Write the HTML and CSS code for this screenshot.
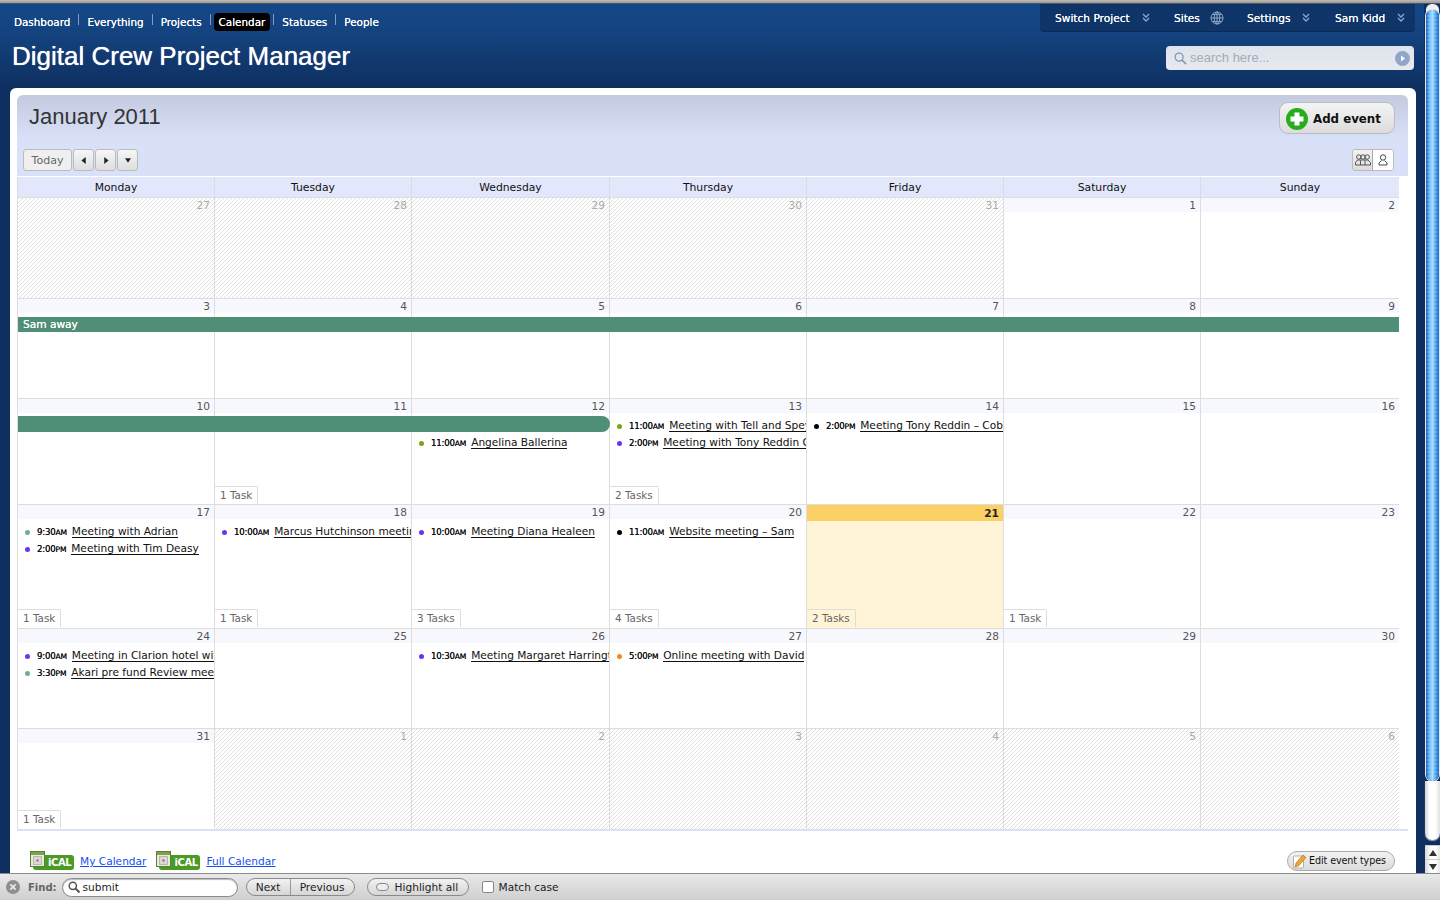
FILE: index.html
```html
<!DOCTYPE html>
<html lang="en">
<head>
<meta charset="utf-8">
<title>Digital Crew Project Manager</title>
<link rel="stylesheet" href="styles.css">
</head>
<body>
<div class="app">
  <div class="topline"></div>
  <div class="main">
    <div class="page">
      <header class="header">
        <div class="header-left">
          <nav class="nav">
            <a class="nav-item">Dashboard</a><i class="sep"></i>
            <a class="nav-item">Everything</a><i class="sep"></i>
            <a class="nav-item">Projects</a><i class="sep"></i>
            <a class="nav-item active">Calendar</a><i class="sep"></i>
            <a class="nav-item">Statuses</a><i class="sep"></i>
            <a class="nav-item">People</a>
          </nav>
          <h1 class="title">Digital Crew Project Manager</h1>
        </div>
        <div class="header-right">
          <div class="usermenu">
            <span class="um um-switch">Switch Project<svg class="chev" viewBox="0 0 8 10"><path d="M1 1l3 3 3-3M1 5l3 3 3-3" fill="none" stroke="#8fa6c6" stroke-width="1.3"/></svg></span>
            <span class="um um-sites">Sites<svg class="globe" viewBox="0 0 14 14"><g fill="none" stroke="#8fa6c6" stroke-width="1"><circle cx="7" cy="7" r="6"/><ellipse cx="7" cy="7" rx="2.8" ry="6"/><path d="M1 7h12M2 3.6h10M2 10.4h10M7 1v12"/></g></svg></span>
            <span class="um um-settings">Settings<svg class="chev" viewBox="0 0 8 10"><path d="M1 1l3 3 3-3M1 5l3 3 3-3" fill="none" stroke="#8fa6c6" stroke-width="1.3"/></svg></span>
            <span class="um um-sam">Sam Kidd<svg class="chev" viewBox="0 0 8 10"><path d="M1 1l3 3 3-3M1 5l3 3 3-3" fill="none" stroke="#8fa6c6" stroke-width="1.3"/></svg></span>
          </div>
          <div class="search">
            <svg class="mag" viewBox="0 0 14 14"><g fill="none" stroke="#7f98bc" stroke-width="1.4"><circle cx="5.5" cy="5.5" r="4.3"/><path d="M8.6 8.6l4.4 4.4" stroke-width="1.8"/></g></svg>
            <span class="placeholder">search here...</span>
            <svg class="go" viewBox="0 0 15 15"><circle cx="7.5" cy="7.5" r="7.5" fill="#8fa6c9"/><path d="M6 4.5l4 3-4 3z" fill="#fff"/></svg>
          </div>
        </div>
      </header>

      <section class="panel">
        <div class="cal-head">
          <div class="head-top">
            <h2 class="month">January 2011</h2>
            <button class="add"><svg class="plus" viewBox="0 0 22 22"><circle cx="11" cy="11" r="11" fill="#27ac1c"/><path d="M8.5 4.5h5v4h4v5h-4v4h-5v-4h-4v-5h4z" fill="#fff"/></svg>Add event</button>
          </div>
          <div class="head-tools">
            <div class="tools-left">
              <span class="tbtn today-btn">Today</span>
              <span class="tbtn arrow"><svg viewBox="0 0 6 8"><path d="M5 0v8L0 4z"/></svg></span>
              <span class="tbtn arrow"><svg viewBox="0 0 6 8"><path d="M1 0v8l5-4z"/></svg></span>
              <span class="tbtn arrow"><svg viewBox="0 0 8 6"><path d="M0 0h8L4 6z"/></svg></span>
            </div>
            <div class="toggle">
              <span class="tog"><svg viewBox="0 0 16 12"><g fill="none" stroke="#333" stroke-width=".8"><circle cx="3.800" cy="3" r="2.200"/><circle cx="8" cy="3" r="2.200"/><circle cx="12.200" cy="3" r="2.200"/><path d="M.5 11V8.500L2.500 6h10.500l2.500 2.500V11zM5.500 6.500V11M10 6.500V11"/></g></svg></span>
              <span class="tog on"><svg viewBox="0 0 16 12"><g fill="none" stroke="#333" stroke-width=".9"><circle cx="8" cy="3.500" r="2.700"/><path d="M6.500 6.500L4 9v2h8V9L9.500 6.500"/></g></svg></span>
            </div>
          </div>
        </div>

        <div class="calendar">
          <div class="dow">
            <div>Monday</div><div>Tuesday</div><div>Wednesday</div><div>Thursday</div><div>Friday</div><div>Saturday</div><div>Sunday</div>
          </div>
          <div class="weeks">
            <div class="week">
              <div class="day other"><div class="date">27</div></div>
              <div class="day other"><div class="date">28</div></div>
              <div class="day other"><div class="date">29</div></div>
              <div class="day other"><div class="date">30</div></div>
              <div class="day other"><div class="date">31</div></div>
              <div class="day"><div class="date">1</div></div>
              <div class="day"><div class="date">2</div></div>
            </div>
            <div class="week">
              <div class="day"><div class="date">3</div></div>
              <div class="day"><div class="date">4</div></div>
              <div class="day"><div class="date">5</div></div>
              <div class="day"><div class="date">6</div></div>
              <div class="day"><div class="date">7</div></div>
              <div class="day"><div class="date">8</div></div>
              <div class="day"><div class="date">9</div></div>
              <div class="bar bar-full">Sam away</div>
            </div>
            <div class="week">
              <div class="day"><div class="date">10</div></div>
              <div class="day"><div class="date">11</div><div class="tasks">1 Task</div></div>
              <div class="day"><div class="date">12</div><div class="lane"></div>
                <div class="event"><i class="dot olive"></i><span class="time">11:00<small>AM</small></span><a class="ev-link">Angelina Ballerina</a></div></div>
              <div class="day"><div class="date">13</div>
                <div class="event"><i class="dot olive"></i><span class="time">11:00<small>AM</small></span><a class="ev-link">Meeting with Tell and Spey</a></div>
                <div class="event"><i class="dot violet"></i><span class="time">2:00<small>PM</small></span><a class="ev-link">Meeting with Tony Reddin Cobalt</a></div>
                <div class="tasks">2 Tasks</div></div>
              <div class="day"><div class="date">14</div>
                <div class="event"><i class="dot black"></i><span class="time">2:00<small>PM</small></span><a class="ev-link">Meeting Tony Reddin – Cobalt</a></div></div>
              <div class="day"><div class="date">15</div></div>
              <div class="day"><div class="date">16</div></div>
              <div class="bar bar-part"></div>
            </div>
            <div class="week">
              <div class="day"><div class="date">17</div>
                <div class="event"><i class="dot green"></i><span class="time">9:30<small>AM</small></span><a class="ev-link">Meeting with Adrian</a></div>
                <div class="event"><i class="dot violet"></i><span class="time">2:00<small>PM</small></span><a class="ev-link">Meeting with Tim Deasy</a></div>
                <div class="tasks">1 Task</div></div>
              <div class="day"><div class="date">18</div>
                <div class="event"><i class="dot violet"></i><span class="time">10:00<small>AM</small></span><a class="ev-link">Marcus Hutchinson meeting</a></div>
                <div class="tasks">1 Task</div></div>
              <div class="day"><div class="date">19</div>
                <div class="event"><i class="dot violet"></i><span class="time">10:00<small>AM</small></span><a class="ev-link">Meeting Diana Healeen</a></div>
                <div class="tasks">3 Tasks</div></div>
              <div class="day"><div class="date">20</div>
                <div class="event"><i class="dot black"></i><span class="time">11:00<small>AM</small></span><a class="ev-link">Website meeting – Sam</a></div>
                <div class="tasks">4 Tasks</div></div>
              <div class="day is-today"><div class="date">21</div><div class="tasks">2 Tasks</div></div>
              <div class="day"><div class="date">22</div><div class="tasks">1 Task</div></div>
              <div class="day"><div class="date">23</div></div>
            </div>
            <div class="week">
              <div class="day"><div class="date">24</div>
                <div class="event"><i class="dot violet"></i><span class="time">9:00<small>AM</small></span><a class="ev-link">Meeting in Clarion hotel with</a></div>
                <div class="event"><i class="dot green"></i><span class="time">3:30<small>PM</small></span><a class="ev-link">Akari pre fund Review meeting</a></div></div>
              <div class="day"><div class="date">25</div></div>
              <div class="day"><div class="date">26</div>
                <div class="event"><i class="dot violet"></i><span class="time">10:30<small>AM</small></span><a class="ev-link">Meeting Margaret Harrington</a></div></div>
              <div class="day"><div class="date">27</div>
                <div class="event"><i class="dot orange"></i><span class="time">5:00<small>PM</small></span><a class="ev-link">Online meeting with David</a></div></div>
              <div class="day"><div class="date">28</div></div>
              <div class="day"><div class="date">29</div></div>
              <div class="day"><div class="date">30</div></div>
            </div>
            <div class="week">
              <div class="day"><div class="date">31</div><div class="tasks">1 Task</div></div>
              <div class="day other"><div class="date">1</div></div>
              <div class="day other"><div class="date">2</div></div>
              <div class="day other"><div class="date">3</div></div>
              <div class="day other"><div class="date">4</div></div>
              <div class="day other"><div class="date">5</div></div>
              <div class="day other"><div class="date">6</div></div>
            </div>
          </div>
        </div>

        <footer class="foot">
          <div class="foot-links">
            <span class="ical"><svg class="ical-ico" viewBox="0 0 15 16"><rect x=".5" y=".5" width="14" height="15" fill="#e9ecd8" stroke="#5d7d35"/><rect x="1" y="1" width="13" height="3" fill="#7da24c"/><path d="M3.500 5.500h8v8h-8z" fill="#d9d9d9" stroke="#999" stroke-width=".6"/><rect x="6.500" y="8.500" width="2" height="2" fill="#c0503c"/></svg>iCAL</span>
            <a class="cal-link">My Calendar</a>
            <span class="ical"><svg class="ical-ico" viewBox="0 0 15 16"><rect x=".5" y=".5" width="14" height="15" fill="#e9ecd8" stroke="#5d7d35"/><rect x="1" y="1" width="13" height="3" fill="#7da24c"/><path d="M3.500 5.500h8v8h-8z" fill="#d9d9d9" stroke="#999" stroke-width=".6"/><rect x="6.500" y="8.500" width="2" height="2" fill="#c0503c"/></svg>iCAL</span>
            <a class="cal-link">Full Calendar</a>
          </div>
          <span class="edit"><svg class="pencil" viewBox="0 0 14 16"><rect x=".5" y="3" width="10" height="12" rx="1" fill="#fff" stroke="#a99" stroke-width=".8"/><path d="M2 14l1-4 7-8 3 2.500-7 8z" fill="#e9a63a" stroke="#b5701c" stroke-width=".7"/></svg>Edit event types</span>
        </footer>
      </section>
    </div>
    <div class="scrollbar">
      <div class="thumb"></div>
      <div class="sb-rest"></div>
      <div class="sb-btn"><svg viewBox="0 0 8 6"><path d="M0 6h8L4 0z"/></svg></div>
      <div class="sb-btn"><svg viewBox="0 0 8 6"><path d="M0 0h8L4 6z"/></svg></div>
    </div>
  </div>
  <div class="find">
    <svg class="find-x" viewBox="0 0 14 14"><circle cx="7" cy="7" r="7" fill="#8e8e8e"/><path d="M4.300 4.300l5.400 5.400M9.700 4.300l-5.400 5.400" stroke="#e6e6e6" stroke-width="1.800"/></svg>
    <span class="find-label">Find:</span>
    <div class="find-input"><svg class="find-mag" viewBox="0 0 12 12"><g fill="none" stroke="#555" stroke-width="1.500"><circle cx="4.800" cy="4.800" r="3.600"/><path d="M7.500 7.500l4 4" stroke-width="2"/></g></svg>submit</div>
    <div class="find-group"><span class="fg-next">Next</span><span class="fg-prev">Previous</span></div>
    <div class="find-high"><i class="hl-pill"></i>Highlight all</div>
    <label class="find-match"><i class="check"></i>Match case</label>
  </div>
</div>
</body>
</html>
```
FILE: styles.css
```css
* { box-sizing: border-box; }
html, body { margin: 0; padding: 0; height: 100%; overflow: hidden; }
body { font-family: "DejaVu Sans", sans-serif; font-size: 10.6px; color: #222; }
.app { width: 1440px; height: 900px; display: flex; flex-direction: column; }
.topline { height: 4px; background: linear-gradient(#bcbcbc, #9a9a9a); border-bottom: 1px solid #555; flex: none; }
.main { flex: 1; min-height: 0; display: flex; }
.page { flex: 1; min-width: 0; display: flex; flex-direction: column; background: #0e2f5f; }

/* header */
.header { height: 84px; flex: none; display: flex; justify-content: space-between; background: linear-gradient(#154888 0, #14437f 35%, #0e2f5f 100%); }
.header-left { padding-left: 12px; }
.nav { display: flex; align-items: center; height: 19px; margin-top: 8px; padding-left: 2px; color: #fff; font-size: 10.4px; }
.nav-item { color: #fff; text-shadow: 0 0 .6px #fff; white-space: nowrap; }
.nav-item.active { background: #000; border-radius: 4px; padding: 0 5px; line-height: 18px; height: 18px; margin: 0 -5px; }
.sep { width: 1px; height: 11px; background: #7f9cc2; margin: -5px 8px 0; }
.title { margin: 10px 0 0; font: 400 26px/30px "Liberation Sans", sans-serif; color: #fff; text-shadow: 0 0 .7px #fff; white-space: nowrap; }
.header-right { width: 384px; display: flex; flex-direction: column; align-items: flex-end; padding-right: 10px; }
.usermenu { width: 375px; height: 28px; background: #0f3568; border-bottom: 1px solid #0b2a55; border-radius: 0 0 4px 4px; margin-right: -1px; color: #fff; display: flex; align-items: center; padding: 1px 0 0 15px; }
.um { display: inline-flex; align-items: center; white-space: nowrap; text-shadow: 0 0 .6px #fff; }
.um-switch { width: 119px; }
.um-sites { width: 73px; }
.um-settings { width: 88px; }
.chev { width: 8px; height: 10px; margin-left: 12px; }
.globe { width: 14px; height: 14px; margin-left: 10px; }
.search { width: 248px; height: 24px; margin-top: 14px; background: linear-gradient(#dfe3eb, #e6e9f0); border-radius: 4px; display: flex; align-items: center; padding: 0 4px 0 8px; }
.mag { width: 13px; height: 13px; }
.placeholder { font: 13px "Liberation Sans", sans-serif; color: #a6abb3; margin: 0 0 1px 3px; flex: 1; }
.go { width: 15px; height: 15px; }

/* panel */
.panel { flex: 1; min-height: 0; margin: 0 8px 0 10px; padding: 7px 8px 0 7px; background: #fff; border-radius: 6px 6px 0 0; display: flex; flex-direction: column; }
.cal-head { height: 82px; flex: none; background: linear-gradient(#c4cbdf 0, #d9e1f9 55%, #d9e1f9 100%); border-radius: 6px 6px 0 0; border-bottom: 1px solid #fff; }
.head-top { height: 54px; display: flex; justify-content: space-between; padding: 7px 13px 0 12px; }
.month { margin: 1px 0 0; font: 400 22px/28px "Liberation Sans", sans-serif; color: #333; }
.add { width: 116px; height: 32px; padding: 1px 0 0 6px; display: flex; align-items: center; border: 1px solid #b9bcc2; border-radius: 9px; background: linear-gradient(#f4f4f4, #dcdcdc); font: 700 11.8px "DejaVu Sans", sans-serif; color: #111; white-space: nowrap; }
.plus { width: 22px; height: 22px; margin-right: 5px; flex: none; }
.head-tools { height: 22px; display: flex; justify-content: space-between; padding: 0 14px 0 6px; }
.tools-left { display: flex; gap: 1px; }
.tbtn { height: 22px; display: flex; align-items: center; justify-content: center; border: 1px solid #bbb; border-radius: 3px; background: linear-gradient(#f6f6f6, #dedede); }
.today-btn { width: 49px; color: #666; background: #efefef; margin-right: 0; font-size: 11px; }
.arrow { width: 21px; }
.arrow svg { width: 6px; height: 7px; fill: #222; }
.toggle { display: flex; width: 42px; height: 22px; border: 1px solid #bbb; border-radius: 3px; overflow: hidden; }
.tog { width: 21px; display: flex; align-items: center; justify-content: center; background: linear-gradient(#f2f2f2, #dcdcdc); border-right: 1px solid #aaa; }
.tog.on { background: #fff; border-right: 0; }
.tog svg { width: 16px; height: 12px; }

/* calendar */
.calendar { flex: none; border-bottom: 2px solid #dbe1f4; }
.dow { width: 1382px; height: 20px; display: grid; grid-template-columns: 197px 197px 198px 197px 197px 197px 199px; background: #e2e7fb; text-align: center; line-height: 21px; color: #111; font-size: 10.8px; }
.dow > div { border-left: 1px solid #d8dbe6; }
.weeks { width: 1382px; height: 632px; display: grid; grid-template-rows: 101px 100px 106px 124px 100px 101px; }
.week { display: grid; grid-template-columns: 197px 197px 198px 197px 197px 197px 199px; position: relative; min-height: 0; }
.day { min-width: 0; overflow: hidden; display: flex; flex-direction: column; background: #fff; border-left: 1px solid #ddd; border-top: 1px solid #ddd; }
.date { height: 14px; flex: none; background: #f7f8fe; text-align: right; padding-right: 4px; line-height: 15px; color: #555; }
.other { background: repeating-linear-gradient(135deg, #e0e0e0 0, #e0e0e0 1px, #fff 1px, #fff 2.83px); }
.other .date { background: none; color: #aaa; }
.is-today { background: #fff5d6; }
.is-today .date { background: #fbd165; font-weight: 700; color: #222; height: 16px; line-height: 17px; }
.lane { height: 17px; flex: none; margin-top: 4px; }
.lane + .event { margin-top: 0; }
.event { height: 17px; flex: none; display: flex; align-items: center; padding-left: 7px; white-space: nowrap; }
.date + .event { margin-top: 4px; }
.dot { width: 5px; height: 5px; border-radius: 50%; flex: none; margin-right: 7px; margin-top: 2px; }
.olive { background: #7aa51a; }
.violet { background: #6a35ee; }
.green { background: #6fb08f; }
.black { background: #000; }
.orange { background: #ef8a1c; }
.time { font-size: 8.6px; letter-spacing: -.2px; margin-right: 5px; color: #111; margin-top: 1px; text-shadow: 0 0 .4px #111; }
.time small { font-size: 7.6px; }
.ev-link { color: #111; border-bottom: 1px solid #111; line-height: 13px; height: 13px; }
.tasks { margin: auto 0 1px; align-self: flex-start; height: 18px; line-height: 17px; padding: 0 5px; border-top: 1px solid #ddd; border-right: 1px solid #ddd; border-radius: 0 2px 0 0; color: #666; background: #fff; white-space: nowrap; font-size: 10.4px; }
.week:nth-child(3) .tasks { margin-bottom: 0; }
.is-today .tasks { background: #fff5d6; }
.bar { position: absolute; left: 1px; color: #fff; background: #4f8f76; padding-left: 5px; text-shadow: 0 0 .5px #fff; }
.bar-full { top: 19px; right: 0; height: 15px; line-height: 15px; }
.bar-part { top: 18px; width: 592px; height: 16px; border-radius: 0 8px 8px 0; }

/* footer */
.foot { flex: 1; min-height: 0; display: flex; justify-content: space-between; padding: 20px 13px 0 16px; }
.foot-links { display: flex; align-items: flex-start; }
.ical { position: relative; width: 41px; height: 15px; margin: 4px 0 0; background: #4a9a25; border-radius: 3px; color: #fff; font: 700 10px/15px "DejaVu Sans", sans-serif; padding-left: 15px; letter-spacing: -.4px; white-space: nowrap; }
.ical-ico { position: absolute; left: -3px; top: -4px; width: 15px; height: 16px; }
.cal-link { color: #1450f0; text-decoration: underline; margin: 4px 13px 0 6px; }
.edit { width: 108px; height: 20px; display: flex; align-items: center; padding: 0 0 1px 5px; border: 1px solid #aaa; border-radius: 10px; background: linear-gradient(#f2f2f2, #dcdcdc); font-size: 9.6px; letter-spacing: -.1px; color: #111; white-space: nowrap; }
.pencil { width: 14px; height: 16px; margin-right: 2px; flex: none; }

/* scrollbar */
.scrollbar { width: 16px; flex: none; display: flex; flex-direction: column; background: #0e2f5f; padding-left: 1px; }
.thumb { margin: 6px 1px 0; height: 771px; flex: none; border-radius: 6px 6px 7px 7px; background: repeating-linear-gradient(0deg, rgba(255,255,255,.1) 0, rgba(255,255,255,.1) 2px, transparent 2px, transparent 4px), linear-gradient(90deg, #0f5fc4, #66b4f4 25%, #a9dcff 50%, #4da3ee 75%, #0f5fc4); box-shadow: 0 0 0 1px #e8e8e8, 0 -6px 0 0 #f0f0f0; }
.sb-rest { flex: 1; margin: 0 0 5px; border-radius: 0 0 7px 7px; background: linear-gradient(90deg, #d0d0d0, #fff 30%, #fff 70%, #e0e0e0); box-shadow: 0 1px 1px #aaa; }
.sb-btn { height: 14px; flex: none; margin-left: 0; display: flex; align-items: center; justify-content: center; background: linear-gradient(90deg, #d8d8d8, #fff 40%, #fff 70%, #e6e6e6); border-top: 1px solid #ccc; }
.sb-btn svg { width: 8px; height: 6px; fill: #333; }

/* find bar */
.find { height: 27px; flex: none; display: flex; align-items: center; padding-left: 6px; background: linear-gradient(#e9e9e9, #cfcfcf); border-top: 1px solid #8a8a8a; color: #222; }
.find-x { width: 14px; height: 14px; flex: none; }
.find-label { font-weight: 700; color: #666; margin: 0 5px 0 8px; font-size: 10px; }
.find-input { width: 176px; height: 19px; display: flex; align-items: center; border: 1px solid #8a8a8a; border-radius: 10px; background: #fff; padding-left: 5px; box-shadow: inset 0 1px 1px #bbb; flex: none; }
.find-mag { width: 12px; height: 12px; margin-right: 3px; }
.find-group { margin-left: 8px; width: 109px; height: 18px; display: flex; border: 1px solid #8a8a8a; border-radius: 9px; line-height: 16px; background: linear-gradient(#f2f2f2, #d6d6d6); flex: none; }
.fg-next { width: 44px; text-align: center; border-right: 1px solid #999; }
.fg-prev { flex: 1; text-align: center; }
.find-high { margin-left: 12px; width: 102px; height: 18px; display: flex; align-items: center; border: 1px solid #8a8a8a; border-radius: 9px; background: linear-gradient(#f2f2f2, #d6d6d6); padding-left: 8px; white-space: nowrap; flex: none; }
.hl-pill { width: 13px; height: 8px; border: 1px solid #888; border-radius: 4px; margin-right: 6px; background: #eee; }
.find-match { margin-left: 13px; display: flex; align-items: center; }
.check { width: 12px; height: 12px; border: 1px solid #888; border-radius: 2px; background: #fff; margin-right: 5px; }
```
